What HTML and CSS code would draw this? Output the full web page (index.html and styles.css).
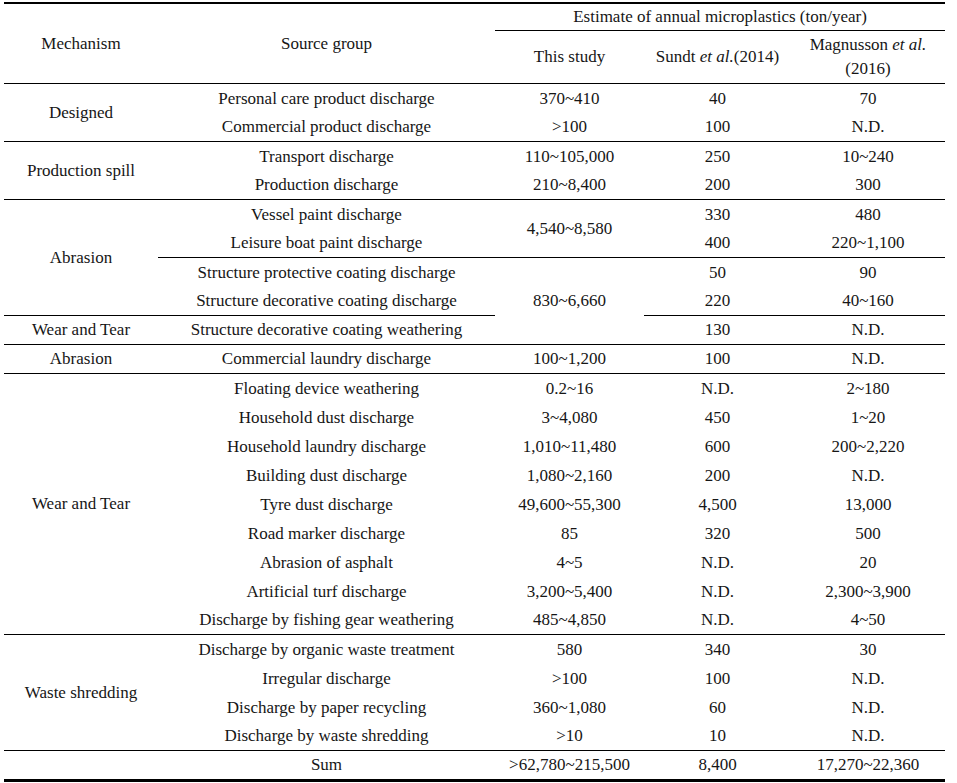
FILE: index.html
```html
<!DOCTYPE html>
<html lang="en">
<head>
<meta charset="utf-8">
<title>Estimate of annual microplastics</title>
<link rel="stylesheet" href="styles.css">
</head>
<body>
<table class="mp">
  <colgroup>
    <col class="c-mech">
    <col class="c-src">
    <col class="c-this">
    <col class="c-sundt">
    <col class="c-mag">
  </colgroup>
  <thead>
    <tr class="h1">
      <th rowspan="2" class="bb">Mechanism</th>
      <th rowspan="2" class="bb">Source group</th>
      <th colspan="3" class="bb">Estimate of annual microplastics (ton/year)</th>
    </tr>
    <tr class="h2">
      <th class="bb">This study</th>
      <th class="bb">Sundt <i>et al.</i>(2014)</th>
      <th class="bb">Magnusson <i>et al.</i><br>(2016)</th>
    </tr>
  </thead>
  <tbody>
    <tr>
      <td rowspan="2" class="bb">Designed</td>
      <td>Personal care product discharge</td>
      <td>370~410</td><td>40</td><td>70</td>
    </tr>
    <tr class="sep">
      <td class="bb">Commercial product discharge</td>
      <td class="bb">&gt;100</td><td class="bb">100</td><td class="bb">N.D.</td>
    </tr>
    <tr>
      <td rowspan="2" class="bb">Production spill</td>
      <td>Transport discharge</td>
      <td>110~105,000</td><td>250</td><td>10~240</td>
    </tr>
    <tr class="sep">
      <td class="bb">Production discharge</td>
      <td class="bb">210~8,400</td><td class="bb">200</td><td class="bb">300</td>
    </tr>
    <tr>
      <td rowspan="4" class="bb">Abrasion</td>
      <td>Vessel paint discharge</td>
      <td rowspan="2" class="bb">4,540~8,580</td><td>330</td><td>480</td>
    </tr>
    <tr class="sep">
      <td class="bb">Leisure boat paint discharge</td>
      <td class="bb">400</td><td class="bb">220~1,100</td>
    </tr>
    <tr>
      <td>Structure protective coating discharge</td>
      <td rowspan="3" class="bb">830~6,660</td><td>50</td><td>90</td>
    </tr>
    <tr class="sep">
      <td class="bb">Structure decorative coating discharge</td>
      <td class="bb">220</td><td class="bb">40~160</td>
    </tr>
    <tr class="sep">
      <td class="bb">Wear and Tear</td>
      <td class="bb">Structure decorative coating weathering</td>
      <td class="bb">130</td><td class="bb">N.D.</td>
    </tr>
    <tr class="sep">
      <td class="bb">Abrasion</td>
      <td class="bb">Commercial laundry discharge</td>
      <td class="bb">100~1,200</td><td class="bb">100</td><td class="bb">N.D.</td>
    </tr>
    <tr>
      <td rowspan="9" class="bb">Wear and Tear</td>
      <td>Floating device weathering</td>
      <td>0.2~16</td><td>N.D.</td><td>2~180</td>
    </tr>
    <tr>
      <td>Household dust discharge</td>
      <td>3~4,080</td><td>450</td><td>1~20</td>
    </tr>
    <tr>
      <td>Household laundry discharge</td>
      <td>1,010~11,480</td><td>600</td><td>200~2,220</td>
    </tr>
    <tr>
      <td>Building dust discharge</td>
      <td>1,080~2,160</td><td>200</td><td>N.D.</td>
    </tr>
    <tr>
      <td>Tyre dust discharge</td>
      <td>49,600~55,300</td><td>4,500</td><td>13,000</td>
    </tr>
    <tr>
      <td>Road marker discharge</td>
      <td>85</td><td>320</td><td>500</td>
    </tr>
    <tr>
      <td>Abrasion of asphalt</td>
      <td>4~5</td><td>N.D.</td><td>20</td>
    </tr>
    <tr>
      <td>Artificial turf discharge</td>
      <td>3,200~5,400</td><td>N.D.</td><td>2,300~3,900</td>
    </tr>
    <tr class="sep">
      <td class="bb">Discharge by fishing gear weathering</td>
      <td class="bb">485~4,850</td><td class="bb">N.D.</td><td class="bb">4~50</td>
    </tr>
    <tr>
      <td rowspan="4" class="bb">Waste shredding</td>
      <td>Discharge by organic waste treatment</td>
      <td>580</td><td>340</td><td>30</td>
    </tr>
    <tr>
      <td>Irregular discharge</td>
      <td>&gt;100</td><td>100</td><td>N.D.</td>
    </tr>
    <tr>
      <td>Discharge by paper recycling</td>
      <td>360~1,080</td><td>60</td><td>N.D.</td>
    </tr>
    <tr class="sep">
      <td class="bb">Discharge by waste shredding</td>
      <td class="bb">&gt;10</td><td class="bb">10</td><td class="bb">N.D.</td>
    </tr>
    <tr class="sum">
      <td></td>
      <td>Sum</td>
      <td>&gt;62,780~215,500</td><td>8,400</td><td>17,270~22,360</td>
    </tr>
  </tbody>
</table>
</body>
</html>
```
FILE: styles.css
```css
html, body {
  margin: 0;
  padding: 0;
  background: #ffffff;
}

body {
  font-family: "Liberation Serif", "Times New Roman", serif;
  font-size: 17px;
  color: #161616;
}

.mp {
  margin: 2px 0 0 4px;
  width: 941px;
  border-collapse: collapse;
  table-layout: fixed;
  border-top: 2px solid #000;
  border-bottom: 3px solid #000;
}

.c-mech { width: 154px; }
.c-src { width: 337px; }
.c-this { width: 149px; }
.c-sundt { width: 147px; }
.c-mag { width: 154px; }

.mp th,
.mp td {
  padding: 0 2px;
  text-align: center;
  vertical-align: middle;
  font-weight: normal;
  line-height: 18px;
  white-space: nowrap;
}

.mp td {
  height: 29px;
}

.mp .sep td {
  height: 28px;
}

.mp .h1 th {
  height: 26px;
}

.mp .h2 th {
  height: 52px;
  line-height: 24px;
}

.mp .bb {
  border-bottom: 1px solid #000;
}

.mp .sum td {
  height: 28px;
}
```
